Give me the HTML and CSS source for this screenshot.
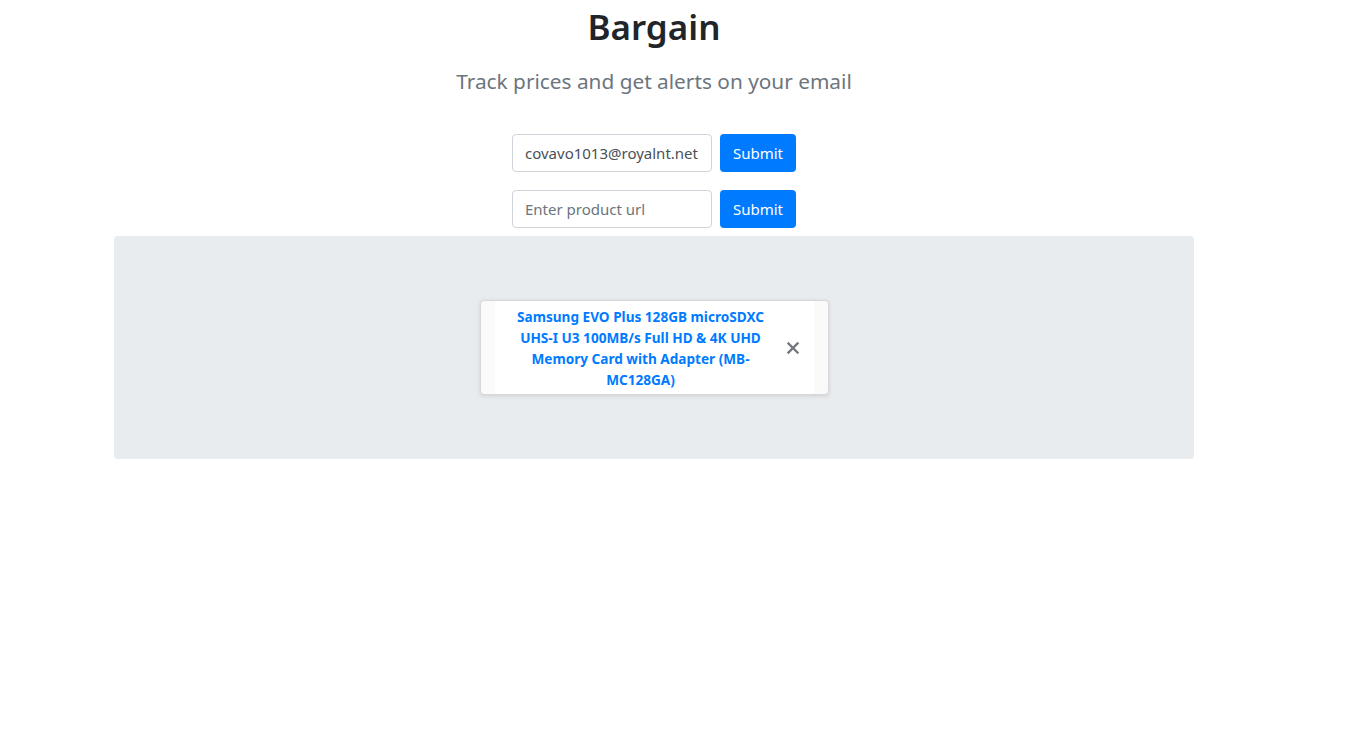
FILE: index.html
```html
<!DOCTYPE html>
<html>
<head>
<meta charset="utf-8">
<link rel="stylesheet" href="styles.css">
</head>
<body>
<div class="page">
  <header class="header">
    <h1 class="title">Bargain</h1>
    <p class="lead">Track prices and get alerts on your email</p>
  </header>
  <form class="row-form">
    <input class="field" type="text" value="covavo1013@royalnt.net">
    <button class="btn" type="button">Submit</button>
  </form>
  <form class="row-form">
    <input class="field" type="text" placeholder="Enter product url">
    <button class="btn" type="button">Submit</button>
  </form>
  <section class="jumbo">
    <div class="card">
      <div class="card-inner">
        <a class="product">Samsung EVO Plus 128GB microSDXC UHS-I U3 100MB/s Full HD &amp; 4K UHD Memory Card with Adapter (MB-MC128GA)</a>
        <span class="close"><svg width="12" height="12" viewBox="0 0 12 12"><path d="M1.5 1.5 L10.5 10.5 M10.5 1.5 L1.5 10.5" stroke="#74797f" stroke-width="2.4" stroke-linecap="square" fill="none"/></svg></span>
      </div>
    </div>
  </section>
</div>
</body>
</html>
```

FILE: styles.css
```css
* { box-sizing: border-box; }
html, body { margin: 0; padding: 0; background: #fff; }
body {
  font-family: "Noto Sans", "Open Sans", sans-serif;
  color: #212529;
}
.page {
  width: 1080px;
  margin-left: 114px;
  display: flex;
  flex-direction: column;
  align-items: center;
}
.header { text-align: center; }
.title {
  margin: 3px 0 0;
  font-size: 35px;
  font-weight: 600;
  line-height: 48px;
  color: #212529;
}
.lead {
  margin: 16px 0 0;
  font-size: 20.8px;
  font-weight: 400;
  line-height: 28px;
  color: #6c757d;
}
.row-form {
  display: flex;
  gap: 8px;
  margin: 0;
}
.row-form:first-of-type { margin-top: 39px; }
.row-form + .row-form { margin-top: 18px; }
.field {
  width: 200px;
  height: 38px;
  border: 1px solid #ced4da;
  border-radius: 4px;
  padding: 0 12px;
  font-family: inherit;
  font-size: 15px;
  color: #495057;
  background: #fff;
  outline: none;
}
.field::placeholder { color: #6c757d; opacity: 1; }
.btn {
  width: 76px;
  height: 38px;
  border: none;
  border-radius: 4px;
  background: #007bff;
  color: #fff;
  font-family: inherit;
  font-size: 15px;
  padding: 0;
}
.jumbo {
  align-self: stretch;
  margin-top: 8px;
  background: #e9ecef;
  border-radius: 4px;
  padding: 64px 32px;
  display: flex;
  justify-content: center;
}
.card {
  width: 349px;
  height: 95px;
  background: #fafafa;
  border: 1px solid #d6d8db;
  border-radius: 4px;
  box-shadow: 0 1px 4px rgba(0,0,0,0.12);
  padding: 0 14px;
  display: flex;
}
.card-inner {
  flex: 1;
  background: #fff;
  display: flex;
  align-items: center;
  padding: 0 15px 0 14px;
  gap: 14px;
}
.product {
  flex: 1;
  text-align: center;
  color: #007bff;
  font-weight: 700;
  font-size: 13.6px;
  line-height: 21px;
}
.close {
  display: flex;
  width: 12px;
  height: 12px;
}
```
